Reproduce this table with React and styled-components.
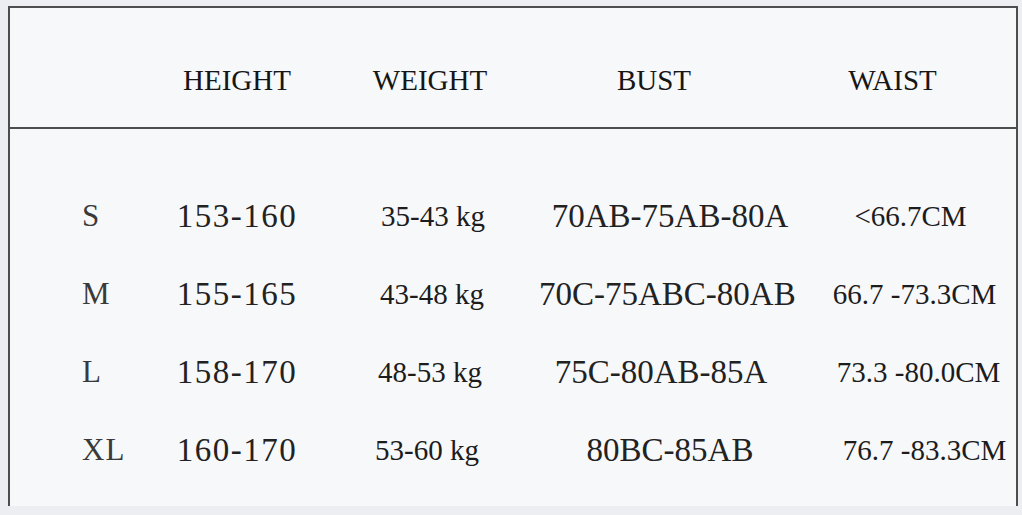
import React from 'react';
import styled, { createGlobalStyle, css } from 'styled-components';

const GlobalStyle = createGlobalStyle`
  html, body {
    margin: 0;
    padding: 0;
    background: #eceef1;
  }
  body {
    font-family: "Liberation Serif", "Times New Roman", serif;
  }
`;

// moves the centre of a centred cell's text by $offset px
const centerOffset = css`
  text-align: center;
  white-space: nowrap;
  padding-left: ${(p) => Math.max(0, (p.$offset || 0) * 2)}px;
  padding-right: ${(p) => Math.max(0, -(p.$offset || 0) * 2)}px;
`;

const Page = styled.div`
  padding: 6px 0 0 8px;
  height: 515px;
  box-sizing: border-box;
  overflow: hidden;
`;

const Chart = styled.div`
  width: 1010px;
  height: 500px;
  box-sizing: border-box;
  background: #f7f8fa;
  border: 2px solid #4d4d4f;
  border-bottom: none;
  display: flex;
  flex-direction: column;
`;

const columns = '141px 172px 216px 252px 1fr';

const HeadRow = styled.div`
  display: grid;
  grid-template-columns: ${columns};
  align-items: center;
  height: 121px;
  box-sizing: border-box;
  padding-top: 26px;
  border-bottom: 2px solid #4d4d4f;
`;

const HeadCell = styled.div`
  font-family: "Liberation Serif", "Times New Roman", serif;
  font-size: 29px;
  color: #161616;
  ${centerOffset}
`;

const Body = styled.div`
  display: flex;
  flex-direction: column;
  padding-top: 48px;
`;

const Row = styled.div`
  display: grid;
  grid-template-columns: ${columns};
  align-items: center;
  height: 78px;
`;

const SizeCell = styled.div`
  font-family: "Liberation Serif", "Times New Roman", serif;
  font-size: 31px;
  color: #3a3a3a;
  padding-left: 72px;
  letter-spacing: 1px;
  white-space: nowrap;
`;

const MonoCell = styled.div`
  font-family: "Liberation Serif", "Times New Roman", serif;
  font-size: 33px;
  color: #222;
  letter-spacing: ${(p) => p.$spacing || 0}px;
  ${centerOffset}
`;

const TextCell = styled.div`
  font-family: "Liberation Serif", "Times New Roman", serif;
  font-size: 29px;
  color: #1c1c1c;
  ${centerOffset}
`;

const rows = [
  { size: 'S', height: '153-160', weight: '35-43 kg', wOff: 2, bust: '70AB-75AB-80A', bOff: 5, waist: '<66.7CM', waOff: 7 },
  { size: 'M', height: '155-165', weight: '43-48 kg', wOff: 1, bust: '70C-75ABC-80AB', bOff: -3, waist: '66.7 -73.3CM', waOff: 11 },
  { size: 'L', height: '158-170', weight: '48-53 kg', wOff: -1, bust: '75C-80AB-85A', bOff: -4, waist: '73.3 -80.0CM', waOff: 15 },
  { size: 'XL', height: '160-170', weight: '53-60 kg', wOff: -4, bust: '80BC-85AB', bOff: 5, waist: '76.7 -83.3CM', waOff: 21 },
];

const App = () => {
  return (
    <>
      <GlobalStyle />
      <Page>
        <Chart>
          <HeadRow>
            <div />
            <HeadCell>HEIGHT</HeadCell>
            <HeadCell $offset={-1}>WEIGHT</HeadCell>
            <HeadCell $offset={-11}>BUST</HeadCell>
            <HeadCell $offset={-11}>WAIST</HeadCell>
          </HeadRow>
          <Body>
            {rows.map((r) => (
              <Row key={r.size}>
                <SizeCell>{r.size}</SizeCell>
                <MonoCell $spacing={1.5}>{r.height}</MonoCell>
                <TextCell $offset={r.wOff}>{r.weight}</TextCell>
                <MonoCell $offset={r.bOff}>{r.bust}</MonoCell>
                <TextCell $offset={r.waOff}>{r.waist}</TextCell>
              </Row>
            ))}
          </Body>
        </Chart>
      </Page>
    </>
  );
};

export default App;
